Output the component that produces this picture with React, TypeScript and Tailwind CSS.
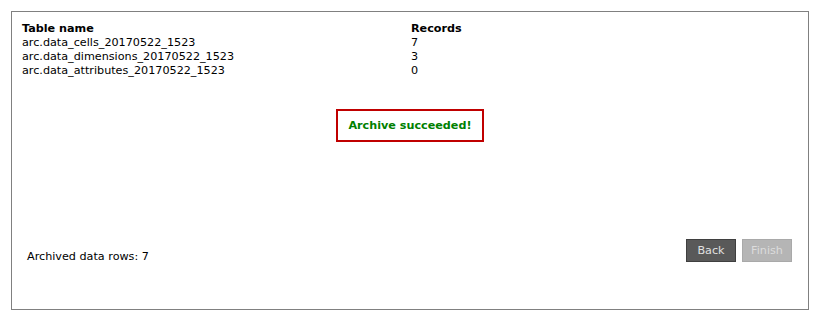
import * as React from "react";

const rows = [
  { name: "arc.data_cells_20170522_1523", records: 7 },
  { name: "arc.data_dimensions_20170522_1523", records: 3 },
  { name: "arc.data_attributes_20170522_1523", records: 0 },
];

export default function App() {
  return (
    <div className="h-[318px] w-[817px] bg-white p-[11px] font-['DejaVu_Sans',Verdana,sans-serif] text-[11.2px] leading-[14px] text-black">
      <div className="flex h-[299px] w-[798px] flex-col border border-[#808080]">
        <div className="grid grid-cols-[389px_1fr] pl-[10px] pt-[10px]">
          <div className="font-bold">Table name</div>
          <div className="font-bold">Records</div>
          {rows.map((r) => (
            <React.Fragment key={r.name}>
              <div>{r.name}</div>
              <div>{r.records}</div>
            </React.Fragment>
          ))}
        </div>

        <div className="mt-[31px] flex justify-center">
          <div className="flex h-[33px] w-[148px] items-center justify-center border-2 border-[#c00000] font-bold text-[#008000]">
            Archive succeeded!
          </div>
        </div>

        <div className="mt-[97px] flex items-start justify-between pl-[15px] pr-[16px]">
          <div className="mt-[11px]">Archived data rows: 7</div>
          <div className="flex gap-[6px]">
            <button className="h-[23px] w-[50px] border border-[#3f3f3f] bg-[#595959] text-[#e0e0e0]">Back</button>
            <button className="h-[23px] w-[50px] border border-[#a9a9a9] bg-[#b5b5b5] text-[#dcdcdc]">Finish</button>
          </div>
        </div>
      </div>
    </div>
  );
}
